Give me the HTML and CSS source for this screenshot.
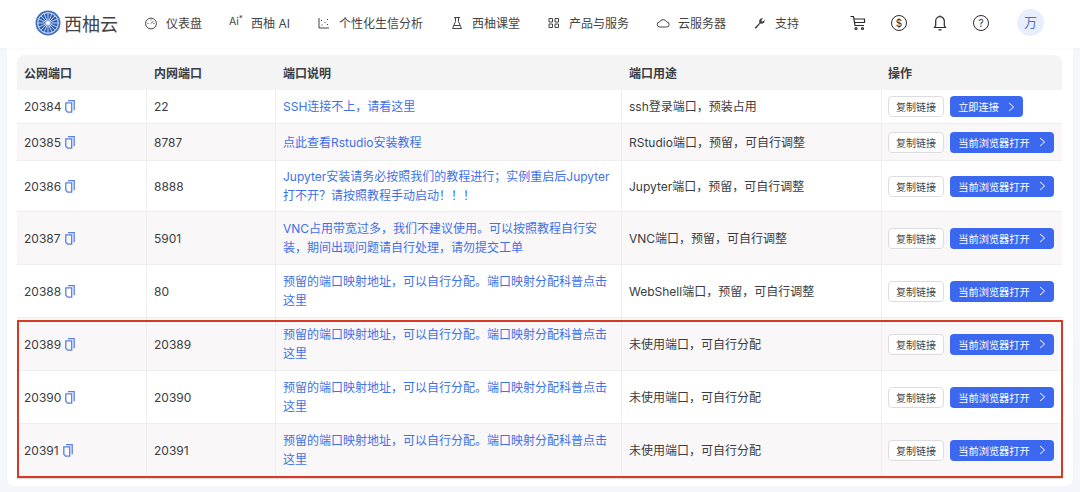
FILE: index.html
```html
<!DOCTYPE html>
<html lang="zh">
<head>
<meta charset="utf-8">
<title>西柚云</title>
<link rel="stylesheet" href="styles.css">
</head>
<body>
<svg class="sprite" width="0" height="0">
  <symbol id="copy" viewBox="0 0 10 13"><path d="M3 .7h6.200v9.600M.8 2.800h5.900v9.400H2.600L.8 10.300z" fill="none" stroke="currentColor" stroke-width="1.300"/></symbol>
  <symbol id="chev" viewBox="0 0 7 10"><path d="M1 1l4.600 4L1 9" fill="none" stroke="currentColor" stroke-width="1"/></symbol>
</svg>
<header class="topbar">
  <div class="logo">
    <svg class="logo-mark" viewBox="0 0 26 26" width="26" height="26"><circle cx="13" cy="13" r="12.500" fill="#3f72c6"/><circle cx="13" cy="13" r="10.300" fill="#2f5fb4" stroke="#dfe8f8" stroke-width="1"/><path d="M13 3v20M3 13h20M6 6l14 14M20 6L6 20M3.800 9l18.400 8M3.800 17l18.400-8M9 3.800l8 18.400M17 3.800L9 22.200" stroke="#cfdcf4" stroke-width=".9"/><circle cx="13" cy="13" r="1.800" fill="#fff"/></svg>
    <span class="logo-text">西柚云</span>
  </div>
  <nav class="nav">
    <a class="nav-item"><svg class="ni" viewBox="0 0 14 14"><circle cx="7" cy="7.500" r="5.400"/><path d="M7 7.500l2.200-2.200M3.500 7.500h1M9.500 7.500h1M7 3.500v1"/></svg>仪表盘</a>
    <a class="nav-item"><span class="ai">Ai<sup>*</sup></span>西柚 AI</a>
    <a class="nav-item"><svg class="ni" viewBox="0 0 14 14"><path d="M2 2v10h10M5 8.500v1M8 6v1M10.500 8v1M4.500 4v1M10.500 3v1"/></svg>个性化生信分析</a>
    <a class="nav-item"><svg class="ni" viewBox="0 0 14 14"><path d="M4 1.500h6M5.500 1.500v4L2.500 12.500h9L8.500 5.500v-4M4 9.500h6"/></svg>西柚课堂</a>
    <a class="nav-item"><svg class="ni" viewBox="0 0 14 14"><path d="M2 2.500h3.500v3.500H2zM8 2.500h3.500v3.500H8zM2 8h3.500v3.500H2zM8 8h3.500v3.500H8z"/></svg>产品与服务</a>
    <a class="nav-item"><svg class="ni" viewBox="0 0 14 14"><path d="M4 11h6.500a2.500 2.500 0 0 0 .3-5A4 4 0 0 0 3.500 6 2.500 2.500 0 0 0 4 11z"/></svg>云服务器</a>
    <a class="nav-item"><svg class="ni solid" viewBox="0 0 14 14"><path d="M1.500 11.800l5-5a3 3 0 0 1 3.600-4.300L8.300 4.300l1.400 1.400 1.800-1.800a3 3 0 0 1-4.200 3.600L3 12.700z"/></svg>支持</a>
  </nav>
  <div class="tools">
    <svg class="tool" viewBox="0 0 18 18"><path d="M1.500 2.500h3l1.500 9h9M5 5h10.500v3.500H5.500"/><circle cx="7" cy="14.500" r="1"/><circle cx="13.500" cy="14.500" r="1"/></svg>
    <span class="tool-round">$</span>
    <svg class="tool" viewBox="0 0 18 18"><path d="M3.500 13.500h11l-1.200-2V7a4.300 4.300 0 0 0-8.600 0v4.500zM7.500 15.800h3M9 1.500v1"/></svg>
    <span class="tool-round">?</span>
    <span class="avatar">万</span>
  </div>
</header>
<main class="panel">
  <div class="table-wrap">
    <table class="ports">
      <colgroup><col class="c1"><col class="c2"><col class="c3"><col class="c4"><col class="c5"></colgroup>
      <thead>
        <tr class="head"><th>公网端口</th><th>内网端口</th><th>端口说明</th><th>端口用途</th><th>操作</th></tr>
      </thead>
      <tbody>
        <tr class="h34"><td><span class="pub">20384<svg class="copy"><use href="#copy"/></svg></span></td><td>22</td><td class="link">SSH连接不上，请看这里</td><td>ssh登录端口，预装占用</td><td><div class="ops"><button class="btn">复制链接</button><button class="btn primary short">立即连接<svg class="chev"><use href="#chev"/></svg></button></div></td></tr>
        <tr class="h37 alt"><td><span class="pub">20385<svg class="copy"><use href="#copy"/></svg></span></td><td>8787</td><td class="link">点此查看Rstudio安装教程</td><td>RStudio端口，预留，可自行调整</td><td><div class="ops"><button class="btn">复制链接</button><button class="btn primary">当前浏览器打开<svg class="chev"><use href="#chev"/></svg></button></div></td></tr>
        <tr class="h51"><td><span class="pub">20386<svg class="copy"><use href="#copy"/></svg></span></td><td>8888</td><td class="link">Jupyter安装请务必按照我们的教程进行；实例重启后Jupyter打不开？请按照教程手动启动！！！</td><td>Jupyter端口，预留，可自行调整</td><td><div class="ops"><button class="btn">复制链接</button><button class="btn primary">当前浏览器打开<svg class="chev"><use href="#chev"/></svg></button></div></td></tr>
        <tr class="h53 alt"><td><span class="pub">20387<svg class="copy"><use href="#copy"/></svg></span></td><td>5901</td><td class="link">VNC占用带宽过多，我们不建议使用。可以按照教程自行安装，期间出现问题请自行处理，请勿提交工单</td><td>VNC端口，预留，可自行调整</td><td><div class="ops"><button class="btn">复制链接</button><button class="btn primary">当前浏览器打开<svg class="chev"><use href="#chev"/></svg></button></div></td></tr>
        <tr class="h53"><td><span class="pub">20388<svg class="copy"><use href="#copy"/></svg></span></td><td>80</td><td class="link">预留的端口映射地址，可以自行分配。端口映射分配科普点击这里</td><td>WebShell端口，预留，可自行调整</td><td><div class="ops"><button class="btn">复制链接</button><button class="btn primary">当前浏览器打开<svg class="chev"><use href="#chev"/></svg></button></div></td></tr>
        <tr class="h53 alt"><td><span class="pub">20389<svg class="copy"><use href="#copy"/></svg></span></td><td>20389</td><td class="link">预留的端口映射地址，可以自行分配。端口映射分配科普点击这里</td><td>未使用端口，可自行分配</td><td><div class="ops"><button class="btn">复制链接</button><button class="btn primary">当前浏览器打开<svg class="chev"><use href="#chev"/></svg></button></div></td></tr>
        <tr class="h53"><td><span class="pub">20390<svg class="copy"><use href="#copy"/></svg></span></td><td>20390</td><td class="link">预留的端口映射地址，可以自行分配。端口映射分配科普点击这里</td><td>未使用端口，可自行分配</td><td><div class="ops"><button class="btn">复制链接</button><button class="btn primary">当前浏览器打开<svg class="chev"><use href="#chev"/></svg></button></div></td></tr>
        <tr class="h53 alt"><td><span class="pub">20391<svg class="copy"><use href="#copy"/></svg></span></td><td>20391</td><td class="link">预留的端口映射地址，可以自行分配。端口映射分配科普点击这里</td><td>未使用端口，可自行分配</td><td><div class="ops"><button class="btn">复制链接</button><button class="btn primary">当前浏览器打开<svg class="chev"><use href="#chev"/></svg></button></div></td></tr>
      </tbody>
    </table>
    <div class="highlight"></div>
  </div>
</main>
</body>
</html>
```
FILE: styles.css
```css
* { box-sizing: border-box; }
html, body { margin: 0; height: 492px; overflow: hidden; }
body { background: #f3f6fb; color: #3a3d42; font: 12px "Inter", "Noto Sans CJK SC", sans-serif; }
.sprite { position: absolute; }
.topbar { height: 48px; background: #fff; display: flex; align-items: center; padding: 0 0 3px 35px; box-shadow: 0 1px 2px rgba(0, 0, 0, .03); position: relative; }
.logo { display: flex; align-items: center; width: 109px; gap: 3px; }
.logo-text { font-size: 18px; color: #444; }
.nav { display: flex; align-items: center; gap: 27px; width: 693px; }
.nav-item { display: flex; align-items: center; gap: 8px; color: #444; font-size: 12px; white-space: nowrap; }
.ni { width: 14px; height: 14px; fill: none; stroke: #444; stroke-width: 1; flex: none; }
.ni.solid { fill: #444; stroke: none; }
.ai { font-size: 10.5px; width: 14px; line-height: 1; }
.ai sup { font-size: 8px; line-height: 0; }
.tools { display: flex; align-items: center; gap: 23px; margin-left: 12px; }
.tool { width: 18px; height: 18px; fill: none; stroke: #2b2b2b; stroke-width: 1.2; flex: none; }
.tool-round { width: 16px; height: 16px; border: 1.2px solid #2b2b2b; border-radius: 50%; font-size: 10px; line-height: 14px; text-align: center; color: #2b2b2b; margin: 0 1px; }
.avatar { width: 27px; height: 27px; border-radius: 50%; background: #e9eefb; color: #4a70d4; font-size: 13px; line-height: 27px; text-align: center; margin-left: 4px; }
.panel { margin: 0 7px; height: 438px; background: #fff; border-radius: 0 0 8px 8px; padding-top: 7px; padding-left: 10px; }
.table-wrap { position: relative; width: 1045px; }
.ports { width: 1045px; border-collapse: separate; border-spacing: 0; table-layout: fixed; }
.c1 { width: 130px; }
.c2 { width: 129px; }
.c3 { width: 346px; }
.c4 { width: 260px; }
.c5 { width: 180px; }
.head th { height: 35px; background: #f4f4f5; text-align: left; font-weight: 600; font-size: 12px; padding: 0 7px; color: #3a3d42; }
.head th:first-child { border-top-left-radius: 8px; }
.head th:last-child { border-top-right-radius: 8px; padding-left: 6px; }
td { padding: 0 7px; border-bottom: 1px solid #eeeeef; border-right: 1px solid #eeeeef; font-size: 12px; line-height: 19px; vertical-align: middle; }
td:last-child { border-right: 0; padding-left: 6px; padding-right: 0; }
.alt td { background: #f9f7f7; }
.h34 td { height: 34px; }
.h37 td { height: 37px; }
.h51 td { height: 51px; }
.h53 td { height: 53px; }
.link { color: #4270e6; }
.pub { display: flex; align-items: center; gap: 4px; }
.copy { width: 10px; height: 13px; color: #5a7fe4; flex: none; }
.ops { display: flex; align-items: center; gap: 6px; }
.btn { height: 21px; width: 56px; padding: 0; border: 1px solid #ddd; border-radius: 4px; background: #fff; color: #444; font: 10px "Inter", "Noto Sans CJK SC", sans-serif; }
.btn.primary { width: 104px; border: 0; background: #3b68ee; color: #fff; font-size: 10.2px; display: flex; align-items: center; justify-content: center; gap: 9px; }
.btn.short { width: 73px; }
.chev { width: 7px; height: 10px; color: #fff; flex: none; }
.highlight { position: absolute; left: 0; top: 265px; width: 1046px; height: 158px; border: 2px solid #d63a24; box-shadow: 0 1px 1px rgba(0, 0, 0, .15); pointer-events: none; }
```
